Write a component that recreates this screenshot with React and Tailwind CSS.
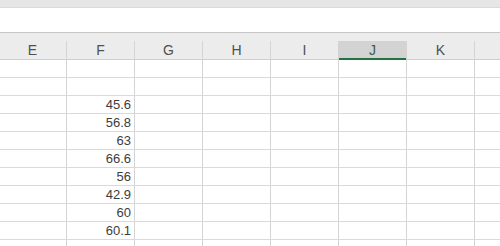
import React from "react";

const cols = ["E", "F", "G", "H", "I", "J", "K", ""];
const widths = [68, 68, 68, 68, 68, 68, 68, 40];
const values = ["", "", "45.6", "56.8", "63", "66.6", "56", "42.9", "60", "60.1", ""];

export default function App() {
  return (
    <div
      className="w-[500px] h-[246px] overflow-hidden bg-white flex flex-col"
      style={{ fontFamily: '"Liberation Sans", Arial, sans-serif' }}
    >
      <div className="h-[8px] shrink-0 bg-[#e6e6e6] border-b border-[#dadada]" />
      <div className="h-[25px] shrink-0 bg-white border-b border-[#c6c6c6]" />
      <div className="h-[8px] shrink-0 bg-[#ececec]" />
      <div className="h-[19px] shrink-0 flex bg-[#ececec] border-b border-[#cfcfcf] -ml-px">
        {cols.map((c, i) => (
          <div
            key={i}
            style={{ width: widths[i] }}
            className={
              "shrink-0 h-full border-r border-[#d4d4d4] flex items-center justify-center text-[14px] leading-none relative " +
              (c === "J" ? "bg-[#d3d3d3] text-[#3b5f47]" : "text-[#505050]")
            }
          >
            {c}
            {c === "J" && (
              <div className="absolute left-0 right-0 bottom-[-1px] h-[2px] bg-[#217346]" />
            )}
          </div>
        ))}
      </div>
      {values.map((v, r) => (
        <div key={r} className="h-[18px] shrink-0 flex border-b border-[#dadada] -ml-px">
          {cols.map((c, i) => (
            <div
              key={i}
              style={{ width: widths[i] }}
              className="shrink-0 h-full border-r border-[#d4d4d4] flex items-center justify-end pr-[3px] text-[13px] leading-none text-[#3c3c3c]"
            >
              {c === "F" ? v : ""}
            </div>
          ))}
        </div>
      ))}
    </div>
  );
}
